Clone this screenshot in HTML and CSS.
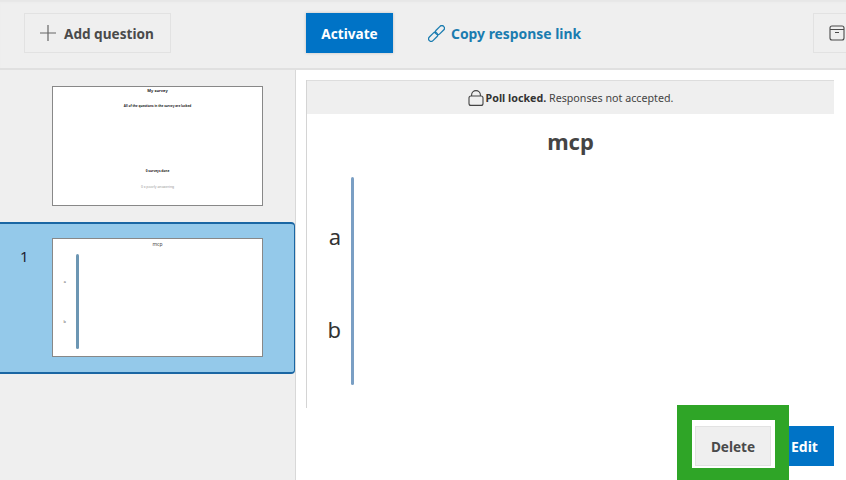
FILE: index.html
```html
<!DOCTYPE html>
<html lang="en">
<head>
  <meta charset="UTF-8">
  <meta name="viewport" content="width=device-width, initial-scale=1.0">
  <title>My survey</title>
  <link rel="stylesheet" href="styles.css">
</head>
<body>
<header class="toolbar">
  <button class="btn btn-add" type="button">
    <svg class="icon-plus" viewBox="0 0 16 16" fill="none" stroke="currentColor" stroke-width="1.2">
      <path d="M8 0v16M0 8h16"/>
    </svg>
    Add question
  </button>
  <button class="btn btn-activate" type="button">Activate</button>
  <a class="copy-link" href="#">
    <svg class="icon-link" viewBox="0 0 16 16" fill="none" stroke="currentColor" stroke-width="1.2">
      <g transform="rotate(-45 8 8)">
        <rect x="-1.5" y="5.6" width="10" height="4.8" rx="2.4"/>
        <rect x="7.5" y="5.6" width="10" height="4.8" rx="2.4"/>
      </g>
    </svg>
    Copy response link
  </a>
  <button class="btn btn-box" type="button">
    <svg class="icon-box" viewBox="0 0 16 16" fill="none" stroke="currentColor" stroke-width="1.1">
      <rect x="1" y="1" width="14" height="14" rx="2"/>
      <path d="M1 4.5h14M6 7.5h4"/>
    </svg>
  </button>
</header>

<div class="editor">
  <aside class="sidebar">
    <div class="slide-row">
      <div class="thumb thumb-intro">
        <div class="thumb-title">My survey</div>
        <div class="thumb-desc">All of the questions in the survey are locked</div>
        <div class="thumb-done">0 surveys done</div>
        <div class="thumb-note">0 x poorly answering</div>
      </div>
    </div>
    <div class="slide-row selected">
      <span class="slide-num">1</span>
      <div class="thumb thumb-poll">
        <div class="thumb-title">mcp</div>
        <div class="thumb-chart">
          <div class="thumb-labels">
            <span>a</span>
            <span>b</span>
          </div>
          <div class="thumb-bar"></div>
        </div>
      </div>
    </div>
  </aside>

  <main class="content">
    <section class="poll">
      <div class="locked-bar">
        <svg class="icon-lock" viewBox="0 0 16 16" fill="none" stroke="currentColor" stroke-width="1.1">
          <rect x="1" y="6" width="14" height="9.4" rx="2"/>
          <path d="M3.6 6V5a4.4 4.4 0 0 1 8.8 0v1"/>
        </svg>
        <span><strong>Poll locked.</strong> Responses not accepted.</span>
      </div>
      <h1 class="poll-title">mcp</h1>
      <div class="chart">
        <div class="chart-labels">
          <span>a</span>
          <span>b</span>
        </div>
        <div class="chart-bar"></div>
      </div>
    </section>
    <div class="actions">
      <div class="highlight">
        <button class="btn btn-delete" type="button">Delete</button>
      </div>
      <button class="btn btn-edit" type="button">Edit</button>
    </div>
  </main>
</div>
</body>
</html>
```
FILE: styles.css
```css
* {
  margin: 0;
  padding: 0;
  box-sizing: border-box;
  font-family: 'Noto Sans', sans-serif;
}

html, body {
  height: 480px;
  overflow: hidden;
}

body {
  background: #efefef;
  color: #444;
}

.btn {
  border: 1px solid #e2e2e2;
  background: #efefef;
  color: #4a4a4a;
  height: 40px;
  font-size: 13.6px;
  font-weight: 700;
}

.toolbar {
  display: flex;
  align-items: center;
  height: 70px;
  padding: 0 0 2px 24px;
  border-bottom: 2px solid #e0e0e0;
  box-shadow: inset 0 3px 2px -1px #e6e6e6;
}

.btn-add {
  display: flex;
  align-items: center;
  gap: 8px;
  width: 147px;
  padding-left: 15px;
}

.icon-plus {
  width: 16px;
  height: 16px;
  color: #666;
}

.btn-activate {
  width: 87px;
  margin-left: 135px;
  background: #0073c6;
  border: none;
  color: #fff;
  box-shadow: 0 0 3px rgba(0, 0, 0, 0.2);
}

.copy-link {
  display: flex;
  align-items: center;
  gap: 6px;
  margin-left: 35px;
  color: #1a7cb0;
  font-size: 13.9px;
  font-weight: 700;
  text-decoration: none;
}

.icon-link {
  width: 17px;
  height: 17px;
}

.btn-box {
  width: 40px;
  margin-left: auto;
  margin-right: -7px;
  padding-left: 15px;
}

.icon-box {
  display: block;
  width: 16px;
  height: 16px;
}

.editor {
  display: grid;
  grid-template-columns: 296px 1fr;
  height: 410px;
}

.sidebar {
  padding-top: 16px;
  border-right: 1px solid #d8d8d8;
}

.slide-row {
  display: flex;
  height: 120px;
  padding-left: 52px;
  position: relative;
}

.slide-row.selected {
  height: 152px;
  margin-top: 16px;
  padding-top: 14px;
  background: #94c9ea;
  border: 2px solid #1a66a3;
  border-left: none;
  border-right-width: 1px;
  border-radius: 0 4px 4px 0;
}

.slide-num {
  position: absolute;
  left: 20px;
  top: 22px;
  font-size: 15px;
  color: #223;
}

.thumb {
  display: flex;
  flex-direction: column;
  align-items: center;
  width: 211px;
  height: 120px;
  background: #fff;
  border: 1px solid #888;
  color: #222;
  font-size: 4px;
  line-height: 6px;
}

.thumb-intro .thumb-title {
  margin-top: 1px;
  font-weight: 700;
}

.thumb-desc {
  margin-top: 9px;
  font-size: 3.1px;
  font-weight: 700;
}

.thumb-done {
  margin-top: 59px;
  font-size: 3.2px;
  font-weight: 700;
}

.thumb-note {
  margin-top: 10px;
  font-size: 3.4px;
  color: #999;
}

.thumb-poll {
  height: 119px;
}

.thumb-poll .thumb-title {
  margin-top: 2px;
  font-size: 5px;
  color: #444;
}

.thumb-chart {
  display: flex;
  align-self: flex-start;
  margin-top: 7px;
}

.thumb-labels {
  display: flex;
  flex-direction: column;
  gap: 34px;
  width: 23px;
  padding: 25px 10px 0 0;
  text-align: right;
  color: #555;
}

.thumb-bar {
  width: 3px;
  height: 95px;
  background: #6c96b3;
  border-radius: 2px;
}

.content {
  padding: 10px 12px 0 10px;
  background: #fff;
}

.poll {
  height: 328px;
  border-left: 1px solid #d4d4d4;
}

.locked-bar {
  display: flex;
  align-items: center;
  justify-content: center;
  gap: 2px;
  height: 34px;
  background: #efefef;
  border-top: 1px solid #ddd;
  font-size: 10.7px;
  color: #444;
}

.locked-bar strong {
  color: #333;
}

.icon-lock {
  width: 16px;
  height: 16px;
  color: #444;
}

.poll-title {
  margin-top: 12px;
  text-align: center;
  font-size: 22px;
  line-height: 30px;
  color: #444;
}

.chart {
  display: flex;
  margin-top: 21px;
}

.chart-labels {
  display: flex;
  flex-direction: column;
  gap: 62px;
  width: 44px;
  padding: 44px 10px 0 0;
  text-align: right;
  font-size: 22px;
  line-height: 31px;
  color: #333;
}

.chart-bar {
  width: 3px;
  height: 208px;
  background: #7a9fc4;
  border-radius: 2px;
}

.actions {
  display: flex;
  justify-content: flex-end;
  align-items: flex-end;
  margin-top: -3px;
}

.highlight {
  padding: 6px 4px 2px 3px;
  background: #fff;
  border: 15px solid #2fa527;
  border-right-width: 14px;
}

.btn-delete {
  display: block;
  width: 76px;
}

.btn-edit {
  width: 45px;
  margin-bottom: 17px;
  background: #0073c6;
  border: none;
  color: #fff;
  font-size: 14px;
  text-align: left;
  padding-left: 2px;
}
```
